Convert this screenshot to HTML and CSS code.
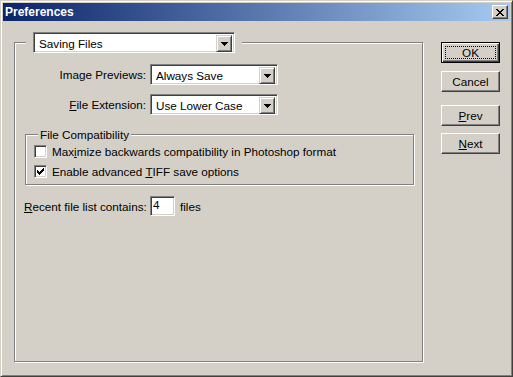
FILE: index.html
```html
<!DOCTYPE html>
<html lang="en">
<head>
    <meta charset="UTF-8">
    <title>Preferences</title>
    <link rel="stylesheet" href="styles.css">
</head>
<body>
    <div class="window">
        <div class="titlebar">
            <span class="title">Preferences</span>
            <span class="close">
                <svg width="8" height="7" viewBox="0 0 8 7" shape-rendering="crispEdges">
                    <path d="M0 0h2v1h-2zM6 0h2v1h-2zM1 1h2v1h-2zM5 1h2v1h-2zM2 2h4v1h-4zM3 3h2v1h-2zM2 4h4v1h-4zM1 5h2v1h-2zM5 5h2v1h-2zM0 6h2v1h-2zM6 6h2v1h-2z" fill="#000"/>
                </svg>
            </span>
        </div>

        <div class="content">
            <fieldset class="group main">
                <legend class="main-legend">
                    <div class="combo wide">
                        <span class="value">Saving Files</span>
                        <span class="arrow"><svg width="7" height="4" viewBox="0 0 7 4" shape-rendering="crispEdges"><path d="M0 0h7v1h-7zM1 1h5v1h-5zM2 2h3v1h-3zM3 3h1v1h-1z" fill="#000"/></svg></span>
                    </div>
                </legend>

                <div class="form">
                    <label class="label">Ima<u>g</u>e Previews:</label>
                    <div class="combo">
                        <span class="value">Always Save</span>
                        <span class="arrow"><svg width="7" height="4" viewBox="0 0 7 4" shape-rendering="crispEdges"><path d="M0 0h7v1h-7zM1 1h5v1h-5zM2 2h3v1h-3zM3 3h1v1h-1z" fill="#000"/></svg></span>
                    </div>
                    <label class="label"><u>F</u>ile Extension:</label>
                    <div class="combo">
                        <span class="value">Use Lower Case</span>
                        <span class="arrow"><svg width="7" height="4" viewBox="0 0 7 4" shape-rendering="crispEdges"><path d="M0 0h7v1h-7zM1 1h5v1h-5zM2 2h3v1h-3zM3 3h1v1h-1z" fill="#000"/></svg></span>
                    </div>
                </div>

                <fieldset class="group compat">
                    <legend class="compat-legend">File Compatibility</legend>
                    <div class="check-row">
                        <span class="checkbox"></span>
                        <span>Max<u>i</u>mize backwards compatibility in Photoshop format</span>
                    </div>
                    <div class="check-row">
                        <span class="checkbox">
                            <svg width="7" height="7" viewBox="0 0 7 7" shape-rendering="crispEdges"><path d="M6 0h1v3h-1zM5 1h1v3h-1zM4 2h1v3h-1zM0 2h1v3h-1zM1 3h1v3h-1zM2 4h1v3h-1zM3 3h1v3h-1z" fill="#000"/></svg>
                        </span>
                        <span>Enable advanced <u>T</u>IFF save options</span>
                    </div>
                </fieldset>

                <div class="recent">
                    <span class="recent-label"><u>R</u>ecent file list contains:</span>
                    <span class="field">4</span>
                    <span>files</span>
                </div>
            </fieldset>

            <div class="buttons">
                <button class="button default"><span class="focus">OK</span></button>
                <button class="button">Cancel</button>
                <button class="button prev"><u>P</u>rev</button>
                <button class="button next"><u>N</u>ext</button>
            </div>
        </div>
    </div>
</body>
</html>
```

FILE: styles.css
```css
body {
    margin: 0;
    font-family: 'Liberation Sans', Arial, sans-serif;
    font-size: 11.7px;
    color: #000;
}

.window {
    width: 513px;
    height: 377px;
    box-sizing: border-box;
    background-color: #d4d0c8;
    border: 1px solid;
    border-color: #d4d0c8 #404040 #404040 #d4d0c8;
    box-shadow: inset 1px 1px 0 #fff, inset -1px -1px 0 #808080;
    padding: 2px;
}

.titlebar {
    height: 18px;
    display: flex;
    align-items: center;
    justify-content: space-between;
    padding-left: 2px;
    background: linear-gradient(to right, #0a246a, #a6caf0);
}

.title {
    color: #fff;
    font-weight: bold;
    font-size: 12px;
}

.close {
    width: 16px;
    height: 14px;
    box-sizing: border-box;
    margin-right: 2px;
    display: flex;
    align-items: center;
    justify-content: center;
    background-color: #d4d0c8;
    border: 1px solid;
    border-color: #fff #404040 #404040 #fff;
    box-shadow: inset -1px -1px 0 #808080;
}

.content {
    display: flex;
    align-items: flex-start;
    padding-left: 11px;
}

.group {
    margin: 0;
    min-width: 0;
    box-sizing: border-box;
    border: 1px solid #808080;
    box-shadow: 1px 1px 0 #fff, inset 1px 1px 0 #fff;
}

.main {
    margin-top: 11px;
    width: 409px;
    height: 330px;
    padding: 11px 7px 0 11px;
}

.main-legend {
    padding: 0 7px;
    background-color: #d4d0c8;
}

/* combo boxes */
.combo {
    display: flex;
    width: 128px;
    height: 21px;
    box-sizing: border-box;
    background-color: #fff;
    border: 1px solid;
    border-color: #808080 #fff #fff #808080;
    box-shadow: inset 1px 1px 0 #404040, inset -1px -1px 0 #d4d0c8;
    padding: 2px;
}

.combo.wide {
    width: 202px;
}

.value {
    flex: 1;
    padding-left: 3px;
    line-height: 17px;
    white-space: nowrap;
}

.arrow {
    width: 16px;
    height: 17px;
    box-sizing: border-box;
    display: flex;
    align-items: center;
    justify-content: center;
    background-color: #d4d0c8;
    border: 1px solid;
    border-color: #d4d0c8 #404040 #404040 #d4d0c8;
    box-shadow: inset 1px 1px 0 #fff, inset -1px -1px 0 #808080;
}

.form {
    display: grid;
    grid-template-columns: 120px 128px;
    column-gap: 4px;
    row-gap: 9px;
    align-items: center;
}

.label {
    text-align: right;
    white-space: nowrap;
}

/* file compatibility group */
.compat {
    margin-top: 13px;
    margin-left: -1px;
    width: 389px;
    padding: 0 0 3px 8px;
}

.compat-legend {
    margin-left: 4px;
    padding: 0 2px;
    line-height: 13px;
    background-color: #d4d0c8;
}

.check-row {
    display: flex;
    align-items: center;
    gap: 5px;
    height: 20px;
    white-space: nowrap;
}

.checkbox {
    width: 13px;
    height: 13px;
    box-sizing: border-box;
    display: flex;
    align-items: center;
    justify-content: center;
    background-color: #fff;
    border: 1px solid;
    border-color: #808080 #fff #fff #808080;
    box-shadow: inset 1px 1px 0 #404040, inset -1px -1px 0 #d4d0c8;
}

.recent {
    display: flex;
    align-items: center;
    margin-top: 11px;
    margin-left: -2px;
}

.recent-label {
    width: 122px;
    margin-right: 4px;
    white-space: nowrap;
}

.field {
    width: 25px;
    height: 20px;
    box-sizing: border-box;
    margin-right: 5px;
    padding-left: 2px;
    line-height: 16px;
    background-color: #fff;
    border: 1px solid;
    border-color: #808080 #fff #fff #808080;
    box-shadow: inset 1px 1px 0 #404040, inset -1px -1px 0 #d4d0c8;
}

/* buttons */
.buttons {
    display: flex;
    flex-direction: column;
    margin-left: 18px;
    margin-top: 21px;
}

.button {
    width: 59px;
    height: 21px;
    box-sizing: border-box;
    margin: 0 0 8px 0;
    padding: 0;
    font-family: inherit;
    font-size: 11.7px;
    color: #000;
    background-color: #d4d0c8;
    border: 1px solid;
    border-color: #fff #404040 #404040 #fff;
    box-shadow: inset -1px -1px 0 #808080;
}

.button.default {
    border-color: #000;
    padding: 3px;
    box-shadow: inset 1px 1px 0 #fff, inset -1px -1px 0 #404040, inset -2px -2px 0 #808080;
}

.focus {
    display: block;
    height: 100%;
    box-sizing: border-box;
    border: 1px dotted #000;
    line-height: 11px;
}

.button.prev {
    margin-top: 5px;
}

.button.next {
    margin-top: -1px;
}
```
